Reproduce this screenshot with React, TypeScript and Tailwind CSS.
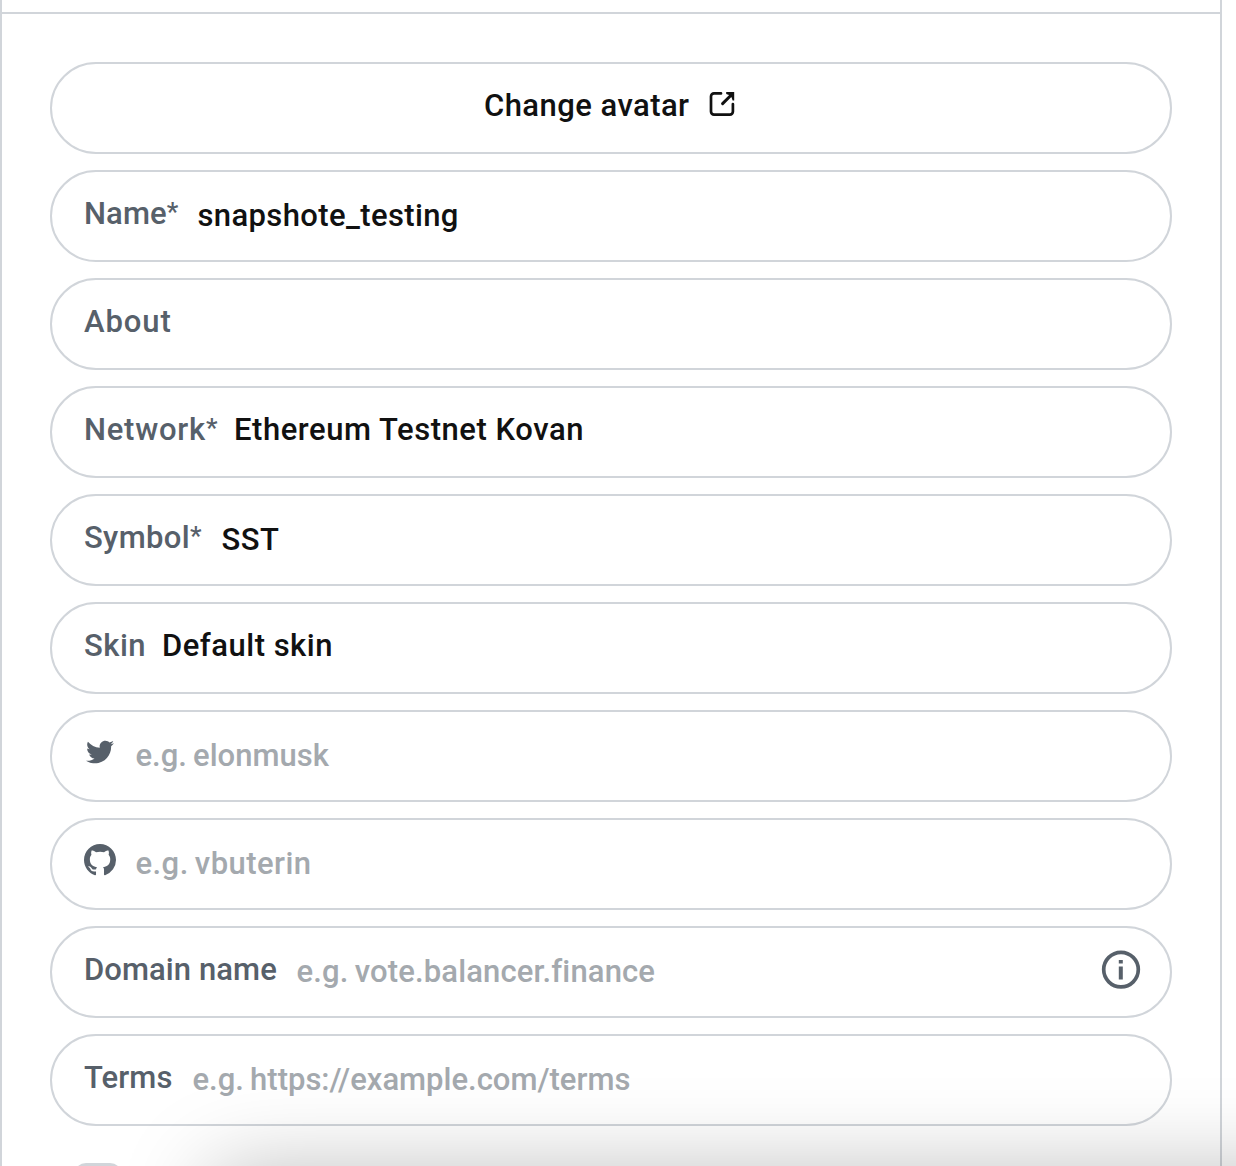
import type { ReactNode } from "react";
import { FaTwitter } from "react-icons/fa";

function Row({ children, center = false }: { children?: ReactNode; center?: boolean }) {
  return (
    <div
      className={`flex h-[92px] shrink-0 items-center rounded-full border-2 border-[#d1d5da] pl-8 pr-[29px] whitespace-pre ${
        center ? "justify-center" : ""
      }`}
    >
      {children}
    </div>
  );
}

function Label({
  children,
  required = false,
  className = "",
}: {
  children: ReactNode;
  required?: boolean;
  className?: string;
}) {
  return (
    <span className={`shrink-0 pb-[4px] text-[#57606a] ${className}`}>
      {children}
      {required && <span className="relative -top-[3px] text-[26px] leading-none">*</span>}
    </span>
  );
}

function Selected({ children, className = "" }: { children: ReactNode; className?: string }) {
  return <span className={`pb-[4px] text-[#111111] ${className}`}>{children}</span>;
}

function Value({ children, className = "" }: { children: ReactNode; className?: string }) {
  return <span className={`text-[#111111] ${className}`}>{children}</span>;
}

function Placeholder({ children, className = "" }: { children: ReactNode; className?: string }) {
  return <span className={`text-[#a4a9ae] [word-spacing:-1.5px] ${className}`}>{children}</span>;
}

function ExternalLinkIcon() {
  return (
    <svg width="26" height="26" viewBox="0 0 26 26" fill="none" stroke="#111111" strokeWidth="2.7" className="mr-[6px] mb-[8px] ml-[19.5px] shrink-0">
      <path d="M12 2.4H5A3 3 0 0 0 2 5.4V20.6A3 3 0 0 0 5 23.6H20.9A3 3 0 0 0 23.9 20.6V13" strokeLinecap="round" />
      <path d="M13.6 12.6L22.5 3.7" strokeWidth="3" strokeLinecap="round" />
      <path d="M17.2 1.1H25.2V9.4H23.6L22.6 6.6L20 4L17.2 3Z" fill="#111111" stroke="none" />
    </svg>
  );
}

function GithubIcon() {
  return (
    <svg width="32" height="32" viewBox="0 0 16 16" fill="#57606a" className="mb-[8px] shrink-0">
      <path
        fillRule="evenodd"
        d="M8 0C3.58 0 0 3.58 0 8c0 3.54 2.29 6.53 5.47 7.59.4.07.55-.17.55-.38 0-.19-.01-.82-.01-1.49-2.01.37-2.53-.49-2.69-.94-.09-.23-.48-.94-.82-1.13-.28-.15-.68-.52-.01-.53.63-.01 1.08.58 1.23.82.72 1.21 1.87.87 2.33.66.07-.52.28-.87.51-1.07-1.78-.2-3.64-.89-3.64-3.95 0-.87.31-1.59.82-2.15-.08-.2-.36-1.02.08-2.12 0 0 .67-.21 2.2.82.64-.18 1.32-.27 2-.27.68 0 1.36.09 2 .27 1.53-1.04 2.2-.82 2.2-.82.44 1.1.16 1.92.08 2.12.51.56.82 1.27.82 2.15 0 3.07-1.87 3.75-3.65 3.95.29.25.54.73.54 1.48 0 1.07-.01 1.93-.01 2.2 0 .21.15.46.55.38A8.013 8.013 0 0 0 16 8c0-4.42-3.58-8-8-8z"
      />
    </svg>
  );
}

function InfoIcon() {
  return (
    <svg width="40" height="40" viewBox="0 0 40 40" className="mb-[5px] ml-auto shrink-0">
      <circle cx="20" cy="19.6" r="17.3" fill="none" stroke="#57606a" strokeWidth="3.7" />
      <path d="M17.8 10h4v3.6h-4zM17.8 16.4h4v13h-4z" fill="#57606a" />
    </svg>
  );
}

export default function App() {
  return (
    <div className="relative h-[1166px] w-[1236px] overflow-hidden bg-white font-['Roboto',sans-serif] text-[31px] leading-[36px] font-medium">
      <div className="h-full w-[1222px] border-x-2 border-[#d1d5da]">
        <div className="h-[14px] border-b-2 border-[#d1d5da]" />
        <div className="flex flex-col gap-4 px-12 pt-12">
          <Row center>
            <Selected className="tracking-[0.45px]">Change avatar</Selected>
            <ExternalLinkIcon />
          </Row>
          <Row>
            <Label required className="w-[113.5px] tracking-[0.1px]">Name</Label>
            <Value className="tracking-[0.38px]">snapshote_testing</Value>
          </Row>
          <Row>
            <Label className="tracking-[0.9px]">About</Label>
          </Row>
          <Row>
            <Label required className="w-[150px] tracking-[0.75px]">Network</Label>
            <Selected className="tracking-[0.54px]">Ethereum Testnet Kovan</Selected>
          </Row>
          <Row>
            <Label required className="w-[137.5px] tracking-[0.35px]">Symbol</Label>
            <Value className="tracking-[0.5px]">SST</Value>
          </Row>
          <Row>
            <Label className="w-[78px] tracking-[0.5px]">Skin</Label>
            <Selected className="tracking-[0.5px]">Default skin</Selected>
          </Row>
          <Row>
            <FaTwitter className="mr-[21.5px] mb-[8px] ml-[2px] size-7 shrink-0 text-[#57606a]" />
            <Placeholder>e.g. elonmusk</Placeholder>
          </Row>
          <Row>
            <GithubIcon />
            <Placeholder className="ml-[19.5px] tracking-[0.45px] [word-spacing:-2px]">e.g. vbuterin</Placeholder>
          </Row>
          <Row>
            <Label className="w-[212.5px] tracking-[0.08px]">Domain name</Label>
            <Placeholder className="tracking-[0.14px]">e.g. vote.balancer.finance</Placeholder>
            <InfoIcon />
          </Row>
          <Row>
            <Label className="w-[108.5px] tracking-[0.1px]">Terms</Label>
            <Placeholder>e.g. https://example.com/terms</Placeholder>
          </Row>
          <div className="mt-[21px] ml-[24px] h-[44px] w-[48px] rounded-[12px] bg-[#d1d5da]" />
        </div>
      </div>
      <div className="pointer-events-none absolute top-[1170px] left-[210px] h-[300px] w-[1300px] rounded-[20px] shadow-[0_0_88px_rgba(0,0,0,0.26)]" />
    </div>
  );
}
